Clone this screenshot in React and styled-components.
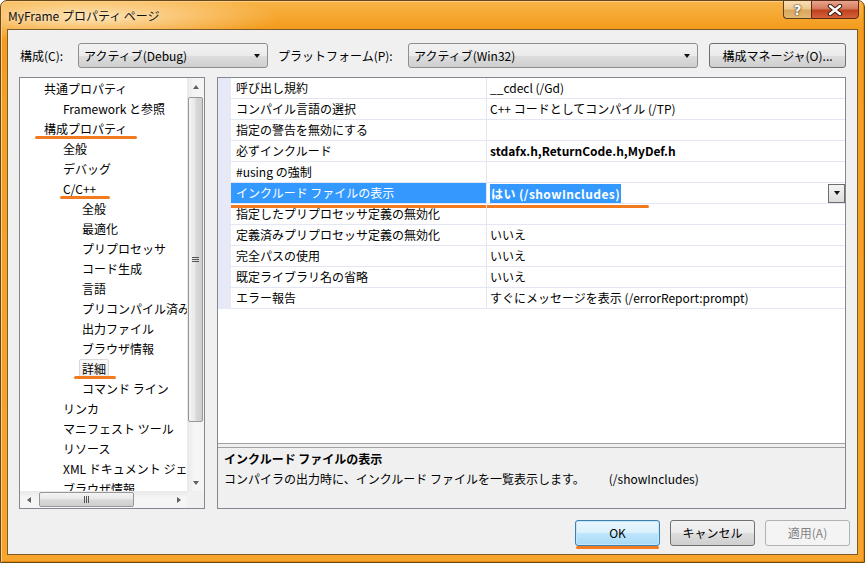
import React from 'react';
import styled, { createGlobalStyle } from 'styled-components';

const font = '"Noto Sans CJK JP", "Noto Sans", sans-serif';
const markColor = '#f47a20';

const treeItems = [
  { label: '共通プロパティ', level: 0 },
  { label: 'Framework と参照', level: 1 },
  { label: '構成プロパティ', level: 0, mark: [15, 102] },
  { label: '全般', level: 1 },
  { label: 'デバッグ', level: 1 },
  { label: 'C/C++', level: 1, mark: [40, 50] },
  { label: '全般', level: 2 },
  { label: '最適化', level: 2 },
  { label: 'プリプロセッサ', level: 2 },
  { label: 'コード生成', level: 2 },
  { label: '言語', level: 2 },
  { label: 'プリコンパイル済みヘッダー', level: 2 },
  { label: '出力ファイル', level: 2 },
  { label: 'ブラウザ情報', level: 2 },
  { label: '詳細', level: 2, selected: true, mark: [54, 42] },
  { label: 'コマンド ライン', level: 2 },
  { label: 'リンカ', level: 1 },
  { label: 'マニフェスト ツール', level: 1 },
  { label: 'リソース', level: 1 },
  { label: 'XML ドキュメント ジェネレータ', level: 1 },
  { label: 'ブラウザ情報', level: 1 },
];

const properties = [
  { name: '呼び出し規約', value: '__cdecl (/Gd)' },
  { name: 'コンパイル言語の選択', value: 'C++ コードとしてコンパイル (/TP)' },
  { name: '指定の警告を無効にする', value: '' },
  { name: '必ずインクルード', value: 'stdafx.h,ReturnCode.h,MyDef.h', bold: true },
  { name: '#using の強制', value: '' },
  { name: 'インクルード ファイルの表示', value: 'はい (/showIncludes)', selected: true },
  { name: '指定したプリプロセッサ定義の無効化', value: '' },
  { name: '定義済みプリプロセッサ定義の無効化', value: 'いいえ' },
  { name: '完全パスの使用', value: 'いいえ' },
  { name: '既定ライブラリ名の省略', value: 'いいえ' },
  { name: 'エラー報告', value: 'すぐにメッセージを表示 (/errorReport:prompt)' },
];

function App() {
  return (
    <>
      <GlobalStyle />
      <Window>
        <TitleBar>
          <Title>MyFrame プロパティ ページ</Title>
          <Caption>
            <HelpButton>?</HelpButton>
            <CloseButton>
              <svg width="18" height="12" viewBox="0 0 18 12">
                <path d="M4 2 L14 10 M14 2 L4 10" stroke="#3a1a10" strokeWidth="4.4" strokeLinecap="round" />
                <path d="M4 2 L14 10 M14 2 L4 10" stroke="#fff" strokeWidth="2.4" strokeLinecap="round" />
              </svg>
            </CloseButton>
          </Caption>
        </TitleBar>

        <Client>
          <Toolbar>
            <Label $width={58} $gap={1}>構成(C):</Label>
            <Combo $width={190}>アクティブ(Debug)<Arrow /></Combo>
            <Label $width={130} $gap={10}>プラットフォーム(P):</Label>
            <Combo $width={290}>アクティブ(Win32)<Arrow /></Combo>
            <PushButton $width={137} $gap={11}>構成マネージャ(O)...</PushButton>
          </Toolbar>

          <Main>
            <TreePanel>
              <TreeBody>
                <TreeList>
                  {treeItems.map((item, i) => (
                    <TreeItem key={i} $level={item.level}>
                      <TreeLabel $selected={item.selected}>{item.label}</TreeLabel>
                      {item.mark && <TreeMark $left={item.mark[0]} $width={item.mark[1]} />}
                    </TreeItem>
                  ))}
                </TreeList>
                <VScroll>
                  <ScrollArrow>
                    <TriUp />
                  </ScrollArrow>
                  <VThumb>
                    <Grip $vertical />
                  </VThumb>
                  <ScrollTrack />
                  <ScrollArrow>
                    <TriDown />
                  </ScrollArrow>
                </VScroll>
              </TreeBody>
              <HScrollRow>
                <HScroll>
                  <ScrollArrow>
                    <TriLeft />
                  </ScrollArrow>
                  <HThumb>
                    <Grip />
                  </HThumb>
                  <ScrollTrack />
                  <ScrollArrow>
                    <TriRight />
                  </ScrollArrow>
                </HScroll>
                <Corner />
              </HScrollRow>
            </TreePanel>

            <GridPanel>
              <GridList>
                {properties.map((p, i) => (
                  <PropRow key={i}>
                    <Gutter />
                    <NameCell $selected={p.selected}>{p.name}</NameCell>
                    <ValueCell $bold={p.bold}>
                      {p.selected ? (
                        <>
                          <ValueHighlight>{p.value}</ValueHighlight>
                          <DropButton>
                            <TriDown />
                          </DropButton>
                        </>
                      ) : (
                        p.value
                      )}
                    </ValueCell>
                    {p.selected && <RowMark />}
                  </PropRow>
                ))}
              </GridList>
              <Splitter />
              <Description>
                <DescTitle>インクルード ファイルの表示</DescTitle>
                <DescText>
                  コンパイラの出力時に、インクルード ファイルを一覧表示します。
                  <DescSwitch>(/showIncludes)</DescSwitch>
                </DescText>
              </Description>
            </GridPanel>
          </Main>

          <ButtonRow>
            <DialogButton $default>
              OK
              <OkMark />
            </DialogButton>
            <DialogButton>キャンセル</DialogButton>
            <DialogButton $disabled>適用(A)</DialogButton>
          </ButtonRow>
        </Client>
      </Window>
    </>
  );
}

const GlobalStyle = createGlobalStyle`
  html, body {
    margin: 0;
    padding: 0;
    overflow: hidden;
    background: #ffffff;
  }
  body {
    font-family: ${font};
    font-size: 12px;
    color: #000;
  }
`;

const Window = styled.div`
  width: 865px;
  height: 563px;
  box-sizing: border-box;
  display: flex;
  flex-direction: column;
  padding: 0 6px 7px 6px;
  border: 1px solid #6a4716;
  border-radius: 7px 7px 0 0;
  background:
    radial-gradient(ellipse 190px 26px at 90px 16px, rgba(255, 236, 200, 0.85), rgba(255, 236, 200, 0) 100%),
    linear-gradient(to bottom, #f8b447 0px, #f39b1c 28px, #f4a027 120px, #f6a42c 100%);
  box-shadow: inset 1px 1px 0 #fbd08c, inset -1px -1px 0 #e58b10;
`;

const TitleBar = styled.div`
  height: 28px;
  display: flex;
  align-items: flex-start;
  justify-content: space-between;
`;

const Title = styled.div`
  margin: 7px 0 0 1px;
  font-size: 12px;
  line-height: 16px;
  color: #111;
  text-shadow: 0 0 6px rgba(255, 245, 225, 0.9);
`;

const Caption = styled.div`
  display: flex;
  margin-top: -1px;
  margin-right: -1px;
`;

const HelpButton = styled.div`
  width: 28px;
  height: 19px;
  box-sizing: border-box;
  border: 1px solid #5c3f1a;
  border-right: none;
  border-radius: 0 0 0 4px;
  background: linear-gradient(to bottom, #f9dfb6 0%, #eec98f 45%, #d9a85c 55%, #e5b774 100%);
  color: #fff;
  font: bold 14px/18px "DejaVu Sans", sans-serif;
  text-align: center;
  text-shadow: 0 0 2px #3a2a10, 0 0 1px #3a2a10;
`;

const CloseButton = styled.div`
  width: 48px;
  height: 19px;
  box-sizing: border-box;
  border: 1px solid #5c2a14;
  border-radius: 0 0 4px 0;
  background: linear-gradient(to bottom, #e8a68e 0%, #d47a5c 45%, #c0411e 55%, #d5623a 100%);
  display: flex;
  align-items: center;
  justify-content: center;
`;

const Client = styled.div`
  flex: 1;
  display: flex;
  flex-direction: column;
  background: #f0f0f0;
  border: 1px solid #7d5b29;
  padding: 13px 7px 8px 11px;
  min-height: 0;
`;

const Toolbar = styled.div`
  display: flex;
  align-items: center;
  height: 25px;
`;

const Label = styled.span`
  flex: none;
  width: ${(p) => p.$width}px;
  margin-left: ${(p) => p.$gap || 0}px;
  white-space: nowrap;
  line-height: 16px;
`;

const Combo = styled.div`
  position: relative;
  flex: none;
  width: ${(p) => p.$width}px;
  height: 25px;
  box-sizing: border-box;
  border: 1px solid #8e8f8f;
  border-radius: 3px;
  background: linear-gradient(to bottom, #f2f2f2 0%, #ebebeb 50%, #dddddd 51%, #cfcfcf 100%);
  padding-left: 5px;
  line-height: 23px;
  white-space: nowrap;
`;

const Arrow = styled.span`
  position: absolute;
  right: 7px;
  top: 10px;
  border-left: 3.5px solid transparent;
  border-right: 3.5px solid transparent;
  border-top: 4px solid #111;
`;

const PushButton = styled.div`
  flex: none;
  width: ${(p) => p.$width}px;
  margin-left: ${(p) => p.$gap || 0}px;
  height: 25px;
  box-sizing: border-box;
  border: 1px solid #707070;
  border-radius: 3px;
  background: linear-gradient(to bottom, #f2f2f2 0%, #ebebeb 50%, #dddddd 51%, #cfcfcf 100%);
  text-align: center;
  line-height: 23px;
  white-space: nowrap;
`;

const Main = styled.div`
  display: flex;
  gap: 12px;
  margin-top: 9px;
  height: 432px;
  margin-right: 4px;
`;

const TreePanel = styled.div`
  width: 186px;
  box-sizing: border-box;
  border: 1px solid #828790;
  background: #fff;
  display: flex;
  flex-direction: column;
`;

const TreeBody = styled.div`
  flex: 1;
  display: flex;
  min-height: 0;
`;

const TreeList = styled.div`
  flex: 1;
  overflow: hidden;
`;

const TreeItem = styled.div`
  position: relative;
  height: 20px;
  padding-left: ${(p) => 21 + p.$level * 19}px;
  display: flex;
  align-items: center;
  white-space: nowrap;
`;

const TreeLabel = styled.span`
  padding: 0 2px;
  height: 17px;
  line-height: 17px;
  border: 1px solid ${(p) => (p.$selected ? '#d9d9d9' : 'transparent')};
  border-radius: 2px;
  background: ${(p) => (p.$selected ? 'linear-gradient(to bottom, #fafafa, #ececec)' : 'transparent')};
`;

const TreeMark = styled.span`
  position: absolute;
  left: ${(p) => p.$left}px;
  width: ${(p) => p.$width}px;
  top: 18px;
  height: 3px;
  border-radius: 2px;
  background: ${markColor};
`;

const VScroll = styled.div`
  width: 17px;
  display: flex;
  flex-direction: column;
  background: linear-gradient(to right, #e8e8e8, #f5f5f5 40%, #f5f5f5);
`;

const HScrollRow = styled.div`
  display: flex;
  height: 17px;
`;

const HScroll = styled.div`
  flex: 1;
  display: flex;
  background: linear-gradient(to bottom, #e8e8e8, #f5f5f5 40%, #f5f5f5);
`;

const Corner = styled.div`
  width: 17px;
  background: #f0f0f0;
`;

const ScrollArrow = styled.div`
  width: 17px;
  height: 17px;
  flex: none;
  display: flex;
  align-items: center;
  justify-content: center;
`;

const ScrollTrack = styled.div`
  flex: 1;
`;

const TriUp = styled.span`
  border-left: 3.5px solid transparent;
  border-right: 3.5px solid transparent;
  border-bottom: 4px solid #606060;
`;

const TriDown = styled.span`
  border-left: 3.5px solid transparent;
  border-right: 3.5px solid transparent;
  border-top: 4px solid #606060;
`;

const TriLeft = styled.span`
  border-top: 3.5px solid transparent;
  border-bottom: 3.5px solid transparent;
  border-right: 4px solid #606060;
`;

const TriRight = styled.span`
  border-top: 3.5px solid transparent;
  border-bottom: 3.5px solid transparent;
  border-left: 4px solid #606060;
`;

const VThumb = styled.div`
  margin: 2px 1px 0 1px;
  height: 325px;
  flex: none;
  box-sizing: border-box;
  border: 1px solid #979797;
  border-radius: 2px;
  background: linear-gradient(to right, #f4f4f4 0%, #e8e8e8 45%, #d8d8d8 55%, #cfcfcf 100%);
  display: flex;
  align-items: center;
  justify-content: center;
`;

const HThumb = styled.div`
  margin: 1px 0 1px 2px;
  width: 95px;
  flex: none;
  box-sizing: border-box;
  border: 1px solid #979797;
  border-radius: 2px;
  background: linear-gradient(to bottom, #f4f4f4 0%, #e8e8e8 45%, #d8d8d8 55%, #cfcfcf 100%);
  display: flex;
  align-items: center;
  justify-content: center;
`;

const Grip = styled.span`
  width: ${(p) => (p.$vertical ? '7px' : '5px')};
  height: ${(p) => (p.$vertical ? '5px' : '7px')};
  background: ${(p) =>
    p.$vertical
      ? 'repeating-linear-gradient(to bottom, #555 0 1px, transparent 1px 2px)'
      : 'repeating-linear-gradient(to right, #555 0 1px, transparent 1px 2px)'};
`;

const GridPanel = styled.div`
  flex: 1;
  box-sizing: border-box;
  border: 1px solid #828790;
  background: #f0f0f0;
  display: flex;
  flex-direction: column;
`;

const GridList = styled.div`
  height: 365px;
  background: #fff;
`;

const PropRow = styled.div`
  position: relative;
  display: grid;
  grid-template-columns: 13px 256px 1fr;
  height: 21px;
`;

const Gutter = styled.div`
  background: #e8e9f6;
`;

const NameCell = styled.div`
  box-sizing: border-box;
  padding-left: 5px;
  line-height: 20px;
  white-space: nowrap;
  overflow: hidden;
  border-bottom: 1px solid #e4e6f4;
  border-right: 1px solid #e4e6f4;
  background: ${(p) => (p.$selected ? '#3399ff' : 'transparent')};
  color: ${(p) => (p.$selected ? '#fff' : '#000')};
`;

const ValueCell = styled.div`
  box-sizing: border-box;
  display: flex;
  align-items: center;
  padding-left: 3px;
  line-height: 20px;
  white-space: nowrap;
  overflow: hidden;
  border-bottom: 1px solid #e4e6f4;
  font-weight: ${(p) => (p.$bold ? 700 : 400)};
`;

const ValueHighlight = styled.span`
  background: #3399ff;
  color: #fff;
  font-weight: 700;
  padding: 0 1px;
  line-height: 19px;
  letter-spacing: 0.4px;
`;

const DropButton = styled.span`
  margin-left: auto;
  width: 17px;
  height: 19px;
  box-sizing: border-box;
  border: 1px solid #6d6d6d;
  background: linear-gradient(to bottom, #f4f4f4, #dcdcdc);
  display: flex;
  align-items: center;
  justify-content: center;
  & > span {
    border-top-color: #111;
  }
`;

const RowMark = styled.span`
  position: absolute;
  left: 5px;
  width: 426px;
  top: 22px;
  height: 3px;
  border-radius: 2px;
  background: ${markColor};
`;

const Splitter = styled.div`
  height: 3px;
  border-top: 1px solid #a0a0a0;
  border-bottom: 1px solid #a0a0a0;
  background: #f0f0f0;
`;

const Description = styled.div`
  flex: 1;
  padding: 1px 6px 0 6px;
`;

const DescTitle = styled.div`
  font-weight: 700;
  line-height: 20px;
`;

const DescText = styled.div`
  line-height: 20px;
  white-space: nowrap;
`;

const DescSwitch = styled.span`
  margin-left: 24px;
`;

const ButtonRow = styled.div`
  display: flex;
  justify-content: flex-end;
  gap: 10px;
  margin-top: 11px;
`;

const DialogButton = styled.div`
  position: relative;
  width: 85px;
  height: 26px;
  box-sizing: border-box;
  border: 1px solid ${(p) => (p.$default ? '#3c7fb1' : p.$disabled ? '#adb2b5' : '#707070')};
  border-radius: 3px;
  background: ${(p) =>
    p.$default
      ? 'linear-gradient(to bottom, #eaf6fd 0%, #d9f0fc 50%, #bee6fd 51%, #a7d9f5 100%)'
      : p.$disabled
      ? '#f4f4f4'
      : 'linear-gradient(to bottom, #f2f2f2 0%, #ebebeb 50%, #dddddd 51%, #cfcfcf 100%)'};
  box-shadow: ${(p) => (p.$default ? 'inset 0 0 0 1px #c6e6fa' : 'none')};
  color: ${(p) => (p.$disabled ? '#838383' : '#000')};
  text-align: center;
  line-height: 24px;
  white-space: nowrap;
`;

const OkMark = styled.span`
  position: absolute;
  left: 0;
  right: 0;
  bottom: -4px;
  height: 3px;
  border-radius: 2px;
  background: ${markColor};
`;

export default App;
